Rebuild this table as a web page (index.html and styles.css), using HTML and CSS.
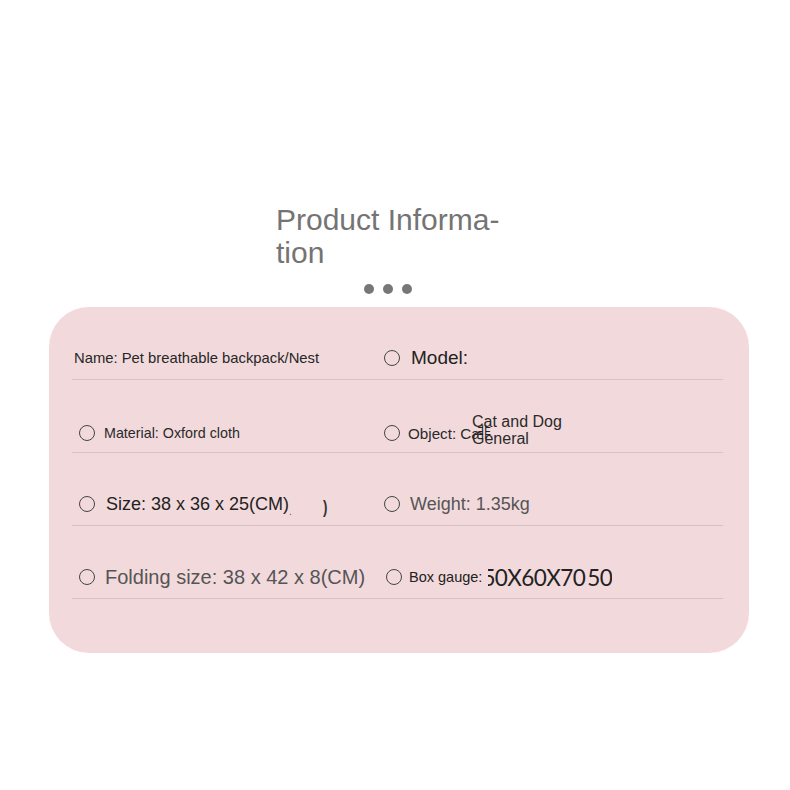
FILE: index.html
```html
<!DOCTYPE html>
<html lang="en">
<head>
    <meta charset="UTF-8">
    <meta name="viewport" content="width=device-width, initial-scale=1.0">
    <title>Product Information</title>
    <link rel="stylesheet" href="styles.css">
</head>
<body>
    <div id="page">
        <h2 class="title">Product Informa-<br>tion</h2>
        <div class="dots">
            <span></span><span></span><span></span>
        </div>

        <div id="card">
            <div class="row">
                <div class="cell cell-left no-ring">
                    <p class="t-name">Name: Pet breathable backpack/Nest</p>
                </div>
                <div class="cell cell-right">
                    <span class="ring"></span>
                    <p class="t-model">Model:</p>
                </div>
            </div>

            <div class="row row-2">
                <div class="cell cell-left">
                    <span class="ring"></span>
                    <p class="t-material">Material: Oxford cloth</p>
                </div>
                <div class="cell cell-right object-cell">
                    <span class="ring"></span>
                    <p class="t-object">Object: Ca</p>
                    <p class="object-over">Cat and Dog<br>General</p>
                    <span class="object-glyph">非</span>
                </div>
            </div>

            <div class="row">
                <div class="cell cell-left">
                    <span class="ring"></span>
                    <p class="t-size">Size: 38 x 36 x 25(CM)</p>
                    <span class="speck">.</span>
                    <span class="paren">)</span>
                </div>
                <div class="cell cell-right">
                    <span class="ring"></span>
                    <p class="t-weight">Weight: 1.35kg</p>
                </div>
            </div>

            <div class="row">
                <div class="cell cell-left">
                    <span class="ring"></span>
                    <p class="t-folding">Folding size: 38 x 42 x 8(CM)</p>
                </div>
                <div class="cell cell-right box-cell">
                    <span class="ring"></span>
                    <p class="t-box">Box gauge:</p>
                    <span class="gauge"><span>50X60X70 50</span></span>
                </div>
            </div>
        </div>
    </div>
</body>
</html>
```

FILE: styles.css
```css
body {
    margin: 0;
    background-color: white;
    font-family: "Liberation Sans", Arial, sans-serif;
}
p {
    margin: 0;
}
#page {
    padding-top: 203px;
}
.title {
    margin: 0 0 0 276px;
    font-size: 30px;
    line-height: 33px;
    font-weight: normal;
    color: #747474;
}
.dots {
    display: flex;
    gap: 9px;
    margin: 15px 0 0 364px;
}
.dots > span {
    width: 10px;
    height: 10px;
    border-radius: 50%;
    background-color: #777777;
}
#card {
    box-sizing: border-box;
    width: 700px;
    height: 346px;
    margin: 13px 0 0 49px;
    padding: 0 26px 0 23px;
    border-radius: 40px;
    background-color: #f2dadc;
}
.row {
    display: flex;
    box-sizing: border-box;
    height: 73px;
    border-bottom: 1px solid #d9c2c4;
}
.cell {
    display: flex;
    align-items: center;
    box-sizing: border-box;
    padding-top: 30px;
}
.row-2 > .cell {
    padding-top: 34px;
}
.cell-left {
    width: 311px;
    padding-left: 7px;
}
.cell-left.no-ring {
    padding-left: 2px;
}
.cell-right {
    flex: 1;
}
.ring {
    box-sizing: border-box;
    width: 16px;
    height: 16px;
    flex-shrink: 0;
    border: 1.4px solid #444;
    border-radius: 50%;
}
.t-name {
    font-size: 14.8px;
    color: #262626;
}
.t-model {
    margin-left: 11px;
    font-size: 19px;
    color: #222;
}
.t-material {
    margin-left: 9px;
    font-size: 14.3px;
    color: #2a2a2a;
}
.object-cell {
    position: relative;
}
.t-object {
    margin-left: 8px;
    font-size: 15.2px;
    color: #2a2a2a;
}
.object-over {
    position: absolute;
    top: 33px;
    left: 89px;
    font-size: 16px;
    line-height: 17px;
    color: #2a2a2a;
}
.object-glyph {
    position: absolute;
    top: 43px;
    left: 94px;
    font-family: "Noto Sans CJK SC", sans-serif;
    font-size: 14px;
    line-height: 16px;
    color: #222;
}
.t-size {
    margin-left: 11px;
    font-size: 18px;
    color: #222;
}
.speck {
    margin: 14px 0 0 0;
    font-size: 10px;
    color: #555;
}
.paren {
    margin-left: 30px;
    margin-top: 6px;
    font-size: 19px;
    font-weight: bold;
    color: #333;
    transform: scaleX(0.7);
}
.cell-right:not(.box-cell) .ring {
    margin-left: 1px;
}
.t-weight {
    margin-left: 10px;
    font-size: 18px;
    color: #555;
}
.t-folding {
    margin-left: 10px;
    font-size: 20px;
    color: #555;
}
.box-cell {
    padding-left: 3px;
}
.t-box {
    margin-left: 7px;
    font-size: 14.5px;
    color: #222;
}
.gauge {
    display: inline-flex;
    overflow: hidden;
    margin-left: 6px;
}
.gauge > span {
    margin-left: -6px;
    font-family: Lato, sans-serif;
    font-size: 22.5px;
    letter-spacing: -0.6px;
    word-spacing: -3px;
    color: #222;
}
```
